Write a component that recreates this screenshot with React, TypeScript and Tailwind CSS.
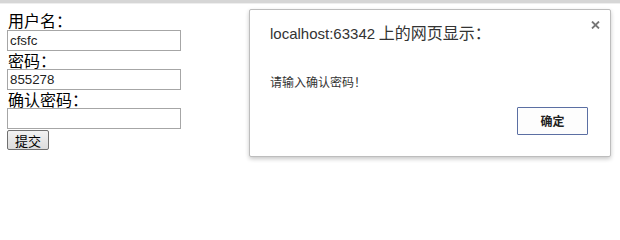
import React from "react";

const cjk = '"Noto Sans CJK SC", "Liberation Sans", sans-serif';

export default function App() {
  return (
    <div className="relative w-[620px] h-[211px] bg-white overflow-hidden">
      <div className="h-[3px] bg-[#d6d6d6]" />
      <div className="h-[1px] bg-[#eeeeee]" />
      <div
        className="flex flex-col items-start pl-[7px] pt-[7px] text-[16px] text-black"
        style={{ fontFamily: cjk }}
      >
        <div className="h-[19px] leading-[19px] pl-[1px]">用户名：</div>
        <div className="w-[174px] h-[21px] border border-[#a6a6a6] flex items-center pl-[2px] text-[13.3px] text-[#222] font-['Liberation_Sans',sans-serif]">
          cfsfc
        </div>
        <div className="h-[18px] leading-[18px] pl-[1px]">密码：</div>
        <div className="w-[174px] h-[21px] border border-[#a6a6a6] flex items-center pl-[2px] text-[13.3px] text-[#222] font-['Liberation_Sans',sans-serif]">
          855278
        </div>
        <div className="h-[18px] leading-[18px] pl-[1px]">确认密码：</div>
        <div className="w-[174px] h-[21px] border border-[#a6a6a6]" />
        <button className="mt-[1px] w-[42px] h-[20px] border border-[#707070] rounded-[2px] bg-gradient-to-b from-[#f2f2f2] to-[#dddddd] text-[13px] leading-none text-black flex items-center justify-center">
          提交
        </button>
      </div>

      <div
        className="absolute left-[249px] top-[9px] w-[362px] h-[148px] bg-white border border-[#bdbdbd] rounded-[2px] shadow-[0_2px_4px_rgba(0,0,0,0.22)] flex flex-col pl-[20px] pr-[22px] pt-[12px]"
        style={{ fontFamily: cjk }}
      >
        <div className="h-[20px] leading-[20px] text-[#333] whitespace-nowrap">
          <span className="text-[15px] font-['Liberation_Sans',sans-serif]">localhost:63342</span>
          <span className="text-[16px]"> 上的网页显示：</span>
        </div>
        <div className="mt-[32px] h-[16px] leading-[16px] text-[12px] text-[#333]">请输入确认密码！</div>
        <div className="mt-[17px] flex justify-end">
          <button className="w-[71px] h-[28px] border border-[#5b6fa3] rounded-[1px] bg-[#fdfdfd] text-[12px] font-bold text-[#222] flex items-center justify-center">
            确定
          </button>
        </div>
        <svg
          className="absolute right-[10px] top-[11px]"
          width="9"
          height="8"
          viewBox="0 0 9 8"
        >
          <path d="M1 0.5 L8 7.5 M8 0.5 L1 7.5" stroke="#777" strokeWidth="1.8" />
        </svg>
      </div>
    </div>
  );
}
